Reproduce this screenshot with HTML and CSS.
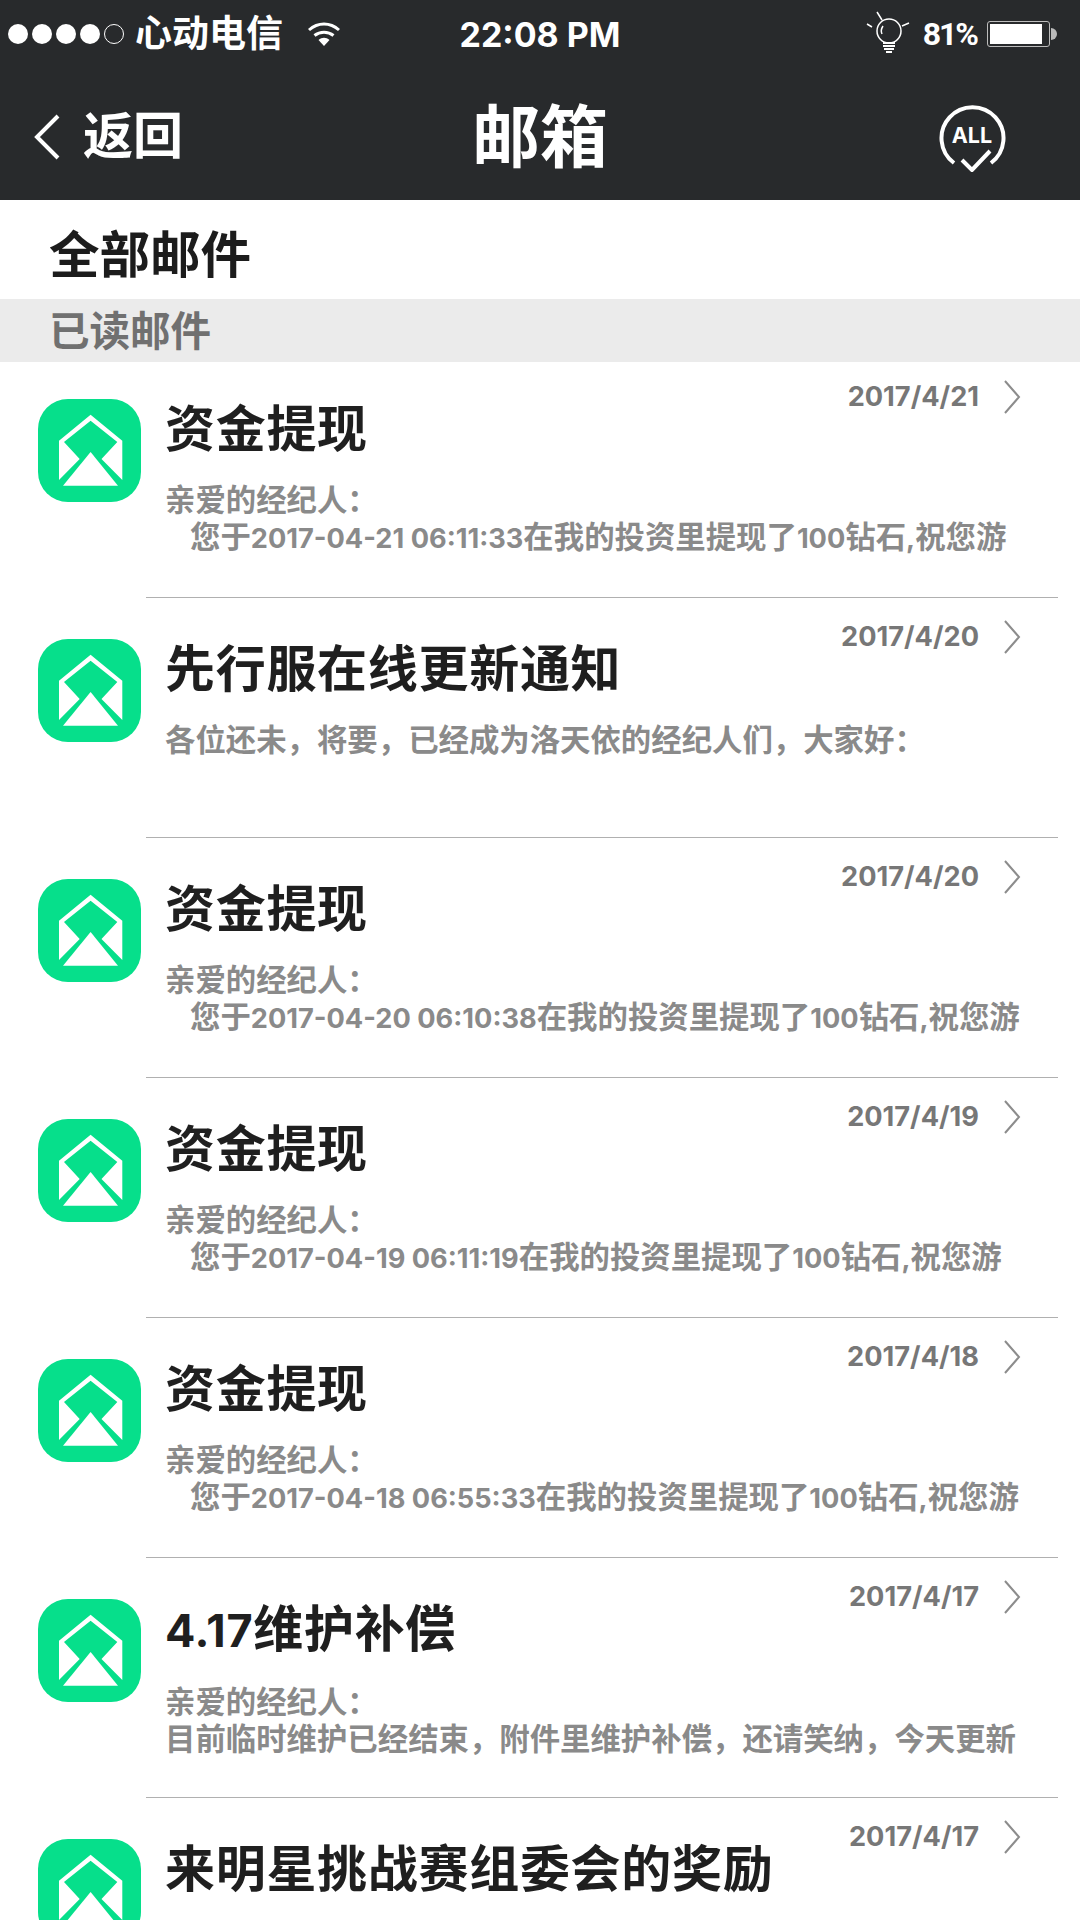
FILE: index.html
```html
<!DOCTYPE html>
<html lang="zh-CN">
<head>
<meta charset="utf-8">
<title>邮箱</title>
<link rel="stylesheet" href="styles.css">
</head>
<body>
<svg class="defs" width="0" height="0" aria-hidden="true">
  <symbol id="mail" viewBox="0 0 103 103">
    <rect width="103" height="103" rx="30" fill="#06df8b"/>
    <path fill="#fff" d="M52.600 15.700 84.300 41.700V81L63.500 60 79.300 43 52.600 21.700 26 43 41.700 60 21 81V41.700Z"/>
    <path fill="#fff" d="M52.600 53 80 86.700H25Z"/>
  </symbol>
  <symbol id="chev" viewBox="0 0 18 34">
    <path d="M2 1 16 17 2 33" fill="none" stroke="#8c8c8c" stroke-width="2"/>
  </symbol>
</svg>
<div class="screen">
  <header class="top">
    <div class="status">
      <div class="status-left">
        <span class="dots"><i></i><i></i><i></i><i></i><i class="off"></i></span>
        <span class="carrier">心动电信</span>
        <svg class="wifi" width="34" height="26" viewBox="0 0 34 26">
          <path d="M2 9C11 1 23 1 32 9M7.500 14.500C13 10 21 10 26.500 14.500" fill="none" stroke="#fff" stroke-width="3"/>
          <path d="M11.500 19C15 16 19 16 22.500 19L17 25Z" fill="#fff"/>
        </svg>
      </div>
      <div class="clock">22:08 PM</div>
      <div class="status-right">
        <svg class="bulb" width="48" height="46" viewBox="0 0 48 46">
          <g fill="none" stroke="#fff" stroke-width="1.500">
            <circle cx="24" cy="20" r="12"/>
            <path d="M12 1 17 9M2 13 7 16M37 15 44 12M18 15C16 18 16 21 17 23"/>
            <path d="M18 32H30M18 35H30M19 38H29M21 41H27" stroke-width="2"/>
          </g>
        </svg>
        <span class="pct">81%</span>
        <span class="battery"><span class="charge"></span></span>
        <span class="nub"></span>
      </div>
    </div>
    <div class="nav">
      <div class="back">
        <svg width="28" height="46" viewBox="0 0 28 46"><path d="M25 2 4 23 25 44" fill="none" stroke="#fff" stroke-width="4"/></svg>
        <span class="back-text">返回</span>
      </div>
      <div class="nav-title">邮箱</div>
      <div class="all">
        <svg width="68" height="68" viewBox="0 0 68 68">
          <path d="M16 59A31 31 0 1 1 53 59" fill="none" stroke="#fff" stroke-width="4"/>
          <path d="M24 56 34 66 52 47" fill="none" stroke="#fff" stroke-width="4"/>
        </svg>
        <span class="all-text">ALL</span>
      </div>
    </div>
  </header>

  <div class="filter">全部邮件</div>
  <div class="section">已读邮件</div>

  <main class="list">
    <article class="row">
      <svg class="icon"><use href="#mail"/></svg>
      <div class="main">
        <div class="meta"><span>2017/4/21</span><svg class="chev"><use href="#chev"/></svg></div>
        <h2>资金提现</h2>
        <p>亲爱的经纪人：</p>
        <p class="indent">您于<span class="num">2017-04-21 06:11:33</span>在我的投资里提现了<span class="num">100</span>钻石<span class="num">,</span>祝您游</p>
      </div>
    </article>
    <article class="row">
      <svg class="icon"><use href="#mail"/></svg>
      <div class="main">
        <div class="meta"><span>2017/4/20</span><svg class="chev"><use href="#chev"/></svg></div>
        <h2>先行服在线更新通知</h2>
        <p>各位还未，将要，已经成为洛天依的经纪人们，大家好：</p>
      </div>
    </article>
    <article class="row">
      <svg class="icon"><use href="#mail"/></svg>
      <div class="main">
        <div class="meta"><span>2017/4/20</span><svg class="chev"><use href="#chev"/></svg></div>
        <h2>资金提现</h2>
        <p>亲爱的经纪人：</p>
        <p class="indent">您于<span class="num">2017-04-20 06:10:38</span>在我的投资里提现了<span class="num">100</span>钻石<span class="num">,</span>祝您游</p>
      </div>
    </article>
    <article class="row">
      <svg class="icon"><use href="#mail"/></svg>
      <div class="main">
        <div class="meta"><span>2017/4/19</span><svg class="chev"><use href="#chev"/></svg></div>
        <h2>资金提现</h2>
        <p>亲爱的经纪人：</p>
        <p class="indent">您于<span class="num">2017-04-19 06:11:19</span>在我的投资里提现了<span class="num">100</span>钻石<span class="num">,</span>祝您游</p>
      </div>
    </article>
    <article class="row">
      <svg class="icon"><use href="#mail"/></svg>
      <div class="main">
        <div class="meta"><span>2017/4/18</span><svg class="chev"><use href="#chev"/></svg></div>
        <h2>资金提现</h2>
        <p>亲爱的经纪人：</p>
        <p class="indent">您于<span class="num">2017-04-18 06:55:33</span>在我的投资里提现了<span class="num">100</span>钻石<span class="num">,</span>祝您游</p>
      </div>
    </article>
    <article class="row">
      <svg class="icon"><use href="#mail"/></svg>
      <div class="main">
        <div class="meta"><span>2017/4/17</span><svg class="chev"><use href="#chev"/></svg></div>
        <h2><span class="title-num">4.17</span>维护补偿</h2>
        <p>亲爱的经纪人：</p>
        <p>目前临时维护已经结束，附件里维护补偿，还请笑纳，今天更新</p>
      </div>
    </article>
    <article class="row">
      <svg class="icon"><use href="#mail"/></svg>
      <div class="main">
        <div class="meta"><span>2017/4/17</span><svg class="chev"><use href="#chev"/></svg></div>
        <h2>来明星挑战赛组委会的奖励</h2>
      </div>
    </article>
  </main>
</div>
</body>
</html>
```
FILE: styles.css
```css
* { box-sizing: border-box; }
html, body { margin: 0; padding: 0; }
body {
  width: 1080px;
  height: 1920px;
  overflow: hidden;
  background: #fff;
  font-family: "Inter", "Noto Sans CJK SC", sans-serif;
}
.defs { position: absolute; }
.screen { width: 1080px; height: 1920px; overflow: hidden; }

.top { height: 200px; background: #282a2c; color: #fff; display: flex; flex-direction: column; }
.status {
  height: 68px;
  padding: 0 8px;
  display: grid;
  grid-template-columns: 1fr auto 1fr;
  align-items: center;
  font-weight: 700;
}
.status-left { display: flex; align-items: center; }
.dots { display: flex; gap: 4px; }
.dots i { width: 20px; height: 20px; border-radius: 50%; background: #fff; }
.dots i.off { background: none; border: 1.500px solid #fff; }
.carrier { margin-left: 11px; font-size: 37px; line-height: 40px; }
.wifi { margin-left: 24px; }
.clock { font-size: 34px; }
.status-right { display: flex; align-items: center; justify-content: flex-end; margin-right: 15px; }
.bulb { margin-right: 10px; }
.pct { font-family: "Roboto", sans-serif; font-size: 32px; letter-spacing: -2px; margin-right: 10px; }
.battery { width: 63px; height: 26px; border: 1.500px solid #bdbdbd; border-radius: 3px; padding: 2px; display: block; }
.charge { display: block; width: 52px; height: 100%; background: #fff; }
.nub { width: 6px; height: 12px; margin-left: 1px; background: #bbb; border-radius: 0 6px 6px 0; }

.nav { height: 132px; padding: 5px 33px 0; display: grid; grid-template-columns: 1fr auto 1fr; align-items: center; }
.back { display: flex; align-items: center; gap: 22px; font-size: 50px; font-weight: 700; }
.back svg { display: block; }
.back-text { margin-bottom: 10px; }
.nav-title { font-size: 68px; font-weight: 700; line-height: 76px; }
.all { position: relative; justify-self: end; width: 68px; height: 68px; margin: 3px 41px 0 0; }
.all svg { display: block; }
.all-text { position: absolute; left: 0; right: 0; top: 18px; text-align: center; font-size: 21.500px; line-height: 26px; font-weight: 700; }

.filter { height: 99px; padding-left: 49px; font-size: 50.500px; line-height: 110px; font-weight: 700; color: #1c1c1c; }
.section { height: 63px; padding-left: 49px; background: #ebebeb; font-size: 40.500px; line-height: 65px; font-weight: 700; color: #707070; }

.row { height: 240px; padding-left: 38px; display: flex; }
.row:first-child { height: 236px; }
.icon { width: 103px; height: 103px; flex: none; margin-top: 41px; }
.row:first-child .icon { margin-top: 37px; }
.main {
  position: relative;
  width: 912px;
  margin-left: 5px;
  padding: 38px 0 0 19px;
  border-bottom: 1px solid #b0b0b0;
}
.row:first-child .main { padding-top: 34px; }
.meta {
  position: absolute;
  right: 37px;
  top: 22px;
  display: flex;
  align-items: center;
  gap: 24px;
  font-size: 27.200px;
  line-height: 34px;
  font-weight: 700;
  color: #777;
}
.row:first-child .meta { top: 18px; }
.chev { width: 18px; height: 34px; display: block; }
h2 { margin: 0 0 20px; font-size: 50px; letter-spacing: .7px; line-height: 66px; font-weight: 700; color: #1f1f1f; white-space: nowrap; }
.title-num { font-size: 45px; }
p { margin: 0; font-size: 30.400px; line-height: 37px; font-weight: 700; color: #8a8a8a; white-space: nowrap; }
p.indent { padding-left: 25px; }
.num { font-size: 27.200px; }
```
